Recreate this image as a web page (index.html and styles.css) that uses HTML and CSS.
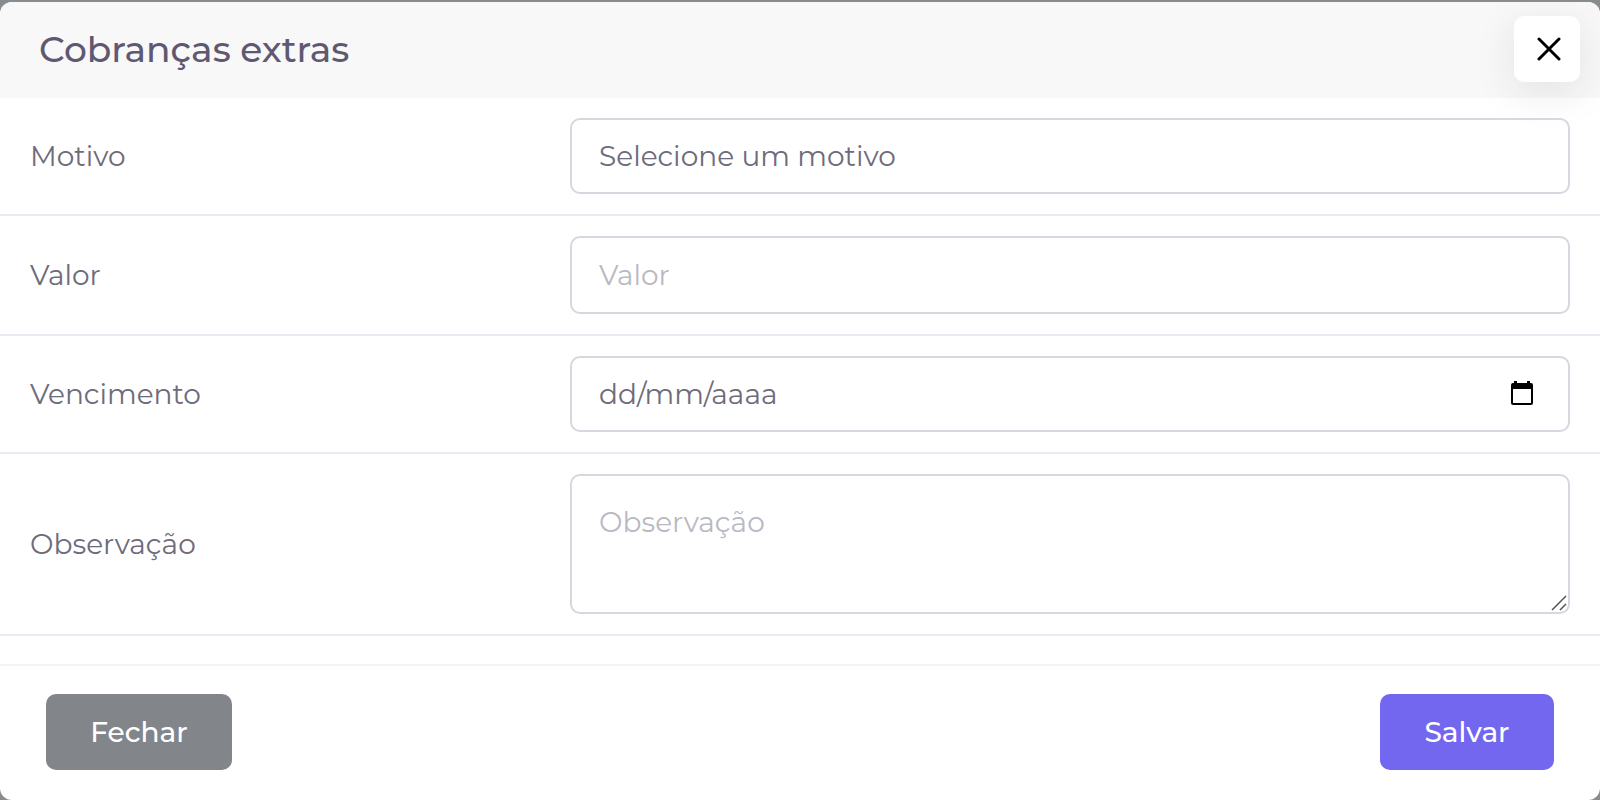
FILE: index.html
```
<!DOCTYPE html>
<html lang="pt-BR">
<head>
    <meta charset="UTF-8">
    <title>Cobranças extras</title>
    <meta name="viewport" content="width=device-width, initial-scale=1.0">
    <link rel="stylesheet" href="styles.css">
</head>
<body>
    <div class="modal" role="dialog" aria-labelledby="modalTitle">
        <div class="modal-header">
            <h1 class="modal-title" id="modalTitle">Cobranças extras</h1>
            <button type="button" class="btn-close" aria-label="Fechar janela">
                <svg width="24" height="24" viewBox="0 0 24 24" fill="none" stroke="#000" stroke-width="3" stroke-linecap="round">
                    <path d="M2 2L22 22M22 2L2 22"/>
                </svg>
            </button>
        </div>

        <form class="modal-form">
            <div class="modal-body">
                <div class="form-row">
                    <label for="motivo">Motivo</label>
                    <select id="motivo" class="form-control">
                        <option>Selecione um motivo</option>
                    </select>
                </div>
                <div class="form-row">
                    <label for="valor">Valor</label>
                    <input type="text" id="valor" class="form-control form-control-valor" placeholder="Valor">
                </div>
                <div class="form-row">
                    <label for="vencimento">Vencimento</label>
                    <div class="field">
                        <input type="text" id="vencimento" class="form-control form-control-date" placeholder="dd/mm/aaaa">
                        <button type="button" class="calendar-button" aria-label="Abrir calendário">
                            <svg width="22" height="24" viewBox="0 0 22 24">
                                <path fill="#000" fill-rule="evenodd" d="M3 0h3v2h10V0h3v2h1a2 2 0 0 1 2 2v18a2 2 0 0 1-2 2H2a2 2 0 0 1-2-2V4a2 2 0 0 1 2-2h1zM2 8v14h18V8z"/>
                            </svg>
                        </button>
                    </div>
                </div>
                <div class="form-row">
                    <label for="observacao">Observação</label>
                    <div class="field">
                        <textarea id="observacao" class="form-control form-control-area" placeholder="Observação"></textarea>
                        <svg class="grip" width="16" height="16" viewBox="0 0 16 16" stroke="#555" stroke-width="1.5">
                            <path d="M1 15L15 1M9 15L15 9"/>
                        </svg>
                    </div>
                </div>
            </div>

            <div class="modal-footer">
                <button type="button" class="btn btn-secondary">Fechar</button>
                <button type="submit" class="btn btn-primary">Salvar</button>
            </div>
        </form>
    </div>
</body>
</html>
```

FILE: styles.css
```
* {
    box-sizing: border-box;
}

body {
    margin: 0;
    padding-top: 2px;
    background: #898c8f;
    color: #6e6b7b;
    font-family: Montserrat, Inter, sans-serif;
    font-size: 28px;
    font-weight: 400;
    line-height: 40px;
}

.modal {
    background: #fff;
    border-radius: 12px;
    overflow: hidden;
}

.modal-header {
    display: flex;
    align-items: flex-start;
    justify-content: space-between;
    height: 96px;
    padding: 14px 20px 0 39px;
    background: #f8f8f8;
}

.modal-title {
    margin: 0;
    color: #5e5873;
    font-size: 36px;
    font-weight: 500;
    line-height: 66px;
}

.btn-close {
    display: flex;
    align-items: center;
    justify-content: center;
    width: 66px;
    height: 66px;
    padding: 0 0 0 4px;
    border: 0;
    border-radius: 10px;
    background: #fff;
    box-shadow: 0 10px 40px rgba(34, 41, 47, 0.1);
    cursor: pointer;
}

.modal-body {
    padding-bottom: 28px;
}

.form-row {
    display: grid;
    grid-template-columns: 27fr 53fr;
    align-items: center;
    border-bottom: 2px solid #ebe9f1;
}

.form-row label {
    padding: 0 30px;
}

.form-row > .form-control,
.field {
    margin: 20px 30px;
}

.field {
    position: relative;
}

.form-control {
    display: block;
    width: auto;
    height: 76px;
    padding: 0 27px;
    border: 2px solid #d8d6de;
    border-radius: 10px;
    background: transparent;
    color: #6e6b7b;
    font: inherit;
    appearance: none;
    outline: 0;
}

.form-control::placeholder {
    color: #b9b9c3;
    opacity: 1;
}

.form-control-valor {
    height: 78px;
}

.field .form-control {
    width: 100%;
}

.form-control-date::placeholder {
    color: #6e6b7b;
}

.form-control-area {
    height: 140px;
    padding-top: 26px;
    resize: vertical;
}

.form-control-area::-webkit-resizer {
    display: none;
}

.calendar-button {
    position: absolute;
    top: 25px;
    right: 37px;
    display: flex;
    padding: 0;
    border: 0;
    background: none;
    cursor: pointer;
}

.grip {
    position: absolute;
    right: 3px;
    bottom: 3px;
    pointer-events: none;
}

.modal-footer {
    display: flex;
    justify-content: space-between;
    padding: 28px 46px 30px;
    border-top: 2px solid #f3f2f4;
}

.btn {
    height: 76px;
    border: 0;
    border-radius: 10px;
    color: #fff;
    font: inherit;
    font-weight: 500;
    cursor: pointer;
}

.btn-secondary {
    width: 186px;
    background: #82868b;
}

.btn-primary {
    width: 174px;
    background: #7367f0;
}
```
